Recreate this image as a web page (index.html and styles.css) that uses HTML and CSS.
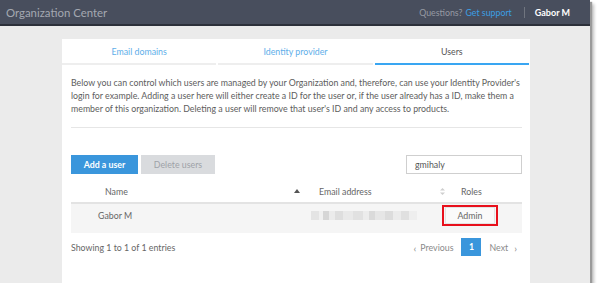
FILE: index.html
```html
<!DOCTYPE html>
<html lang="en">

<head>
    <meta charset="UTF-8">
    <meta name="viewport" content="width=device-width, initial-scale=1.0">
    <link rel="stylesheet" href="styles.css">
</head>

<body>
    <div class="window">
        <div class="topbar">
            <span class="app-title">Organization Center</span>
            <div class="topbar-right">
                <span class="questions">Questions?</span>
                <a class="support-link">Get support</a>
                <span class="topbar-sep"></span>
                <span class="user-name">Gabor M</span>
            </div>
        </div>
        <div class="main">
            <div class="card">
                <div class="tabs">
                    <div class="tab">Email domains</div>
                    <div class="tab">Identity provider</div>
                    <div class="tab tab-active">Users</div>
                </div>
                <div class="card-body">
                    <p class="intro">Below you can control which users are managed by your Organization and, therefore, can use your Identity Provider's login for example. Adding a user here will either create a ID for the user or, if the user already has a ID, make them a member of this organization. Deleting a user will remove that user's ID and any access to products.</p>
                    <div class="divider"></div>
                    <div class="toolbar">
                        <div class="toolbar-buttons">
                            <button class="btn btn-primary">Add a user</button>
                            <button class="btn btn-disabled">Delete users</button>
                        </div>
                        <div class="search-box">gmihaly</div>
                    </div>
                    <div class="users-table">
                        <div class="th th-name">
                            <span>Name</span>
                            <svg class="sort-icon" width="6" height="4" viewBox="0 0 6 4"><path d="M0 4 L3 0 L6 4 Z" fill="#555"/></svg>
                        </div>
                        <div class="th th-email">
                            <span>Email address</span>
                            <svg class="sort-icon" width="5" height="7" viewBox="0 0 5 7"><path d="M0 2.6 L2.5 0 L5 2.6 Z M0 4.4 L2.5 7 L5 4.4 Z" fill="#cfcfcf"/></svg>
                        </div>
                        <div class="th th-roles">Roles</div>
                        <div class="td td-name">Gabor M</div>
                        <div class="td td-email"><div class="blurred-email"></div></div>
                        <div class="td td-roles"><span class="role-badge">Admin</span></div>
                    </div>
                    <div class="table-footer">
                        <span class="entries-info">Showing 1 to 1 of 1 entries</span>
                        <div class="pagination">
                            <span class="page-link"><span class="chev">&lsaquo;</span>Previous</span>
                            <span class="page-current">1</span>
                            <span class="page-link">Next<span class="chev">&rsaquo;</span></span>
                        </div>
                    </div>
                </div>
            </div>
        </div>
    </div>
</body>

</html>
```

FILE: styles.css
```css
body {
    margin: 0;
    background-color: #ffffff;
    font-family: 'Lato', sans-serif;
}

.window {
    width: 590px;
    height: 283px;
    background-color: #ebebeb;
    box-shadow: 2px 2px 1px #9a9a9a, 4px 4px 3px rgba(0, 0, 0, 0.25);
    overflow: hidden;
    display: flex;
    flex-direction: column;
}

.topbar {
    height: 24px;
    flex-shrink: 0;
    background-color: #484e5d;
    border-bottom: 2px solid #2c303a;
    display: flex;
    align-items: center;
    justify-content: space-between;
    padding: 0 6px;
}

.app-title {
    color: #a4a8b1;
    font-size: 11.4px;
}

.topbar-right {
    display: flex;
    align-items: center;
    font-size: 8.8px;
    margin-right: 14px;
}

.questions {
    color: #969aa3;
}

.support-link {
    color: #3b9fe4;
    margin-left: 3px;
}

.topbar-sep {
    width: 1px;
    height: 11px;
    background-color: #70757f;
    margin: 0 10px 0 12px;
}

.user-name {
    color: #ffffff;
    font-weight: bold;
    font-size: 9px;
}

.main {
    flex: 1;
    padding: 13px 0 0 62px;
    display: flex;
}

.card {
    width: 468px;
    background-color: #ffffff;
}

.tabs {
    display: flex;
    height: 26px;
}

.tab {
    flex: 1;
    margin: 0 1px;
    display: flex;
    align-items: center;
    justify-content: center;
    font-size: 8.8px;
    color: #5eaee9;
    border-bottom: 2px solid #eeeeee;
}

.tab:first-child {
    margin-left: 0;
}

.tab-active {
    color: #555555;
    border-bottom-color: #39a6f2;
}

.card-body {
    padding: 0 8px 0 9px;
}

.intro {
    margin: 12px 0 0;
    font-size: 8.8px;
    line-height: 12.8px;
    color: #5d5d5d;
}

.divider {
    height: 1px;
    background-color: #e6e6e6;
    margin-top: 12px;
}

.toolbar {
    margin-top: 27px;
    display: flex;
    justify-content: space-between;
    align-items: center;
}

.toolbar-buttons {
    display: flex;
    gap: 3px;
}

.btn {
    height: 19px;
    border: none;
    padding: 0;
    font-family: 'Lato', sans-serif;
    font-size: 8.8px;
}

.btn-primary {
    width: 67px;
    background-color: #3a96dc;
    color: #ffffff;
    font-weight: bold;
}

.btn-disabled {
    width: 74px;
    background-color: #d9dbde;
    color: #9ea2a8;
}

.search-box {
    width: 106px;
    height: 17px;
    border: 1px solid #cfcfcf;
    padding-left: 8px;
    font-size: 8.8px;
    line-height: 17px;
    color: #555555;
}

.users-table {
    display: grid;
    grid-template-columns: 234px 145px 72px;
}

.th {
    height: 22px;
    padding-top: 6px;
    display: flex;
    align-items: center;
    font-size: 8.8px;
    color: #666666;
    border-bottom: 2px solid #e3e3e3;
}

.sort-icon {
    margin-left: auto;
}

.th-name {
    padding-left: 34px;
    padding-right: 5px;
}

.th-email {
    padding-left: 14px;
    padding-right: 5px;
}

.th-roles {
    padding-left: 11px;
}

.td {
    height: 29px;
    background-color: #f5f5f5;
    display: flex;
    align-items: flex-start;
    font-size: 8.8px;
    color: #666666;
}

.td-name {
    padding: 6px 0 0 27px;
    height: 23px;
}

.td-email {
    padding: 7px 0 0 6px;
    height: 22px;
}

.blurred-email {
    width: 106px;
    height: 9px;
    background: linear-gradient(90deg,
        #e4e4e4 0, #e4e4e4 8px, #f0f0f0 8px, #f0f0f0 12px,
        #d6d6d6 12px, #d6d6d6 18px, #ebebeb 18px, #ebebeb 24px,
        #dedede 24px, #dedede 32px, #e9e9e9 32px, #e9e9e9 42px,
        #e1e1e1 42px, #e1e1e1 52px, #ececec 52px, #ececec 58px,
        #dadada 58px, #dadada 64px, #e6e6e6 64px, #e6e6e6 74px,
        #dcdcdc 74px, #dcdcdc 82px, #ebebeb 82px, #ebebeb 90px,
        #e0e0e0 90px, #e0e0e0 98px, #eeeeee 98px);
}

.td-roles {
    padding-top: 3px;
    height: 26px;
}

.role-badge {
    position: relative;
    margin-left: -5px;
    width: 48px;
    height: 15px;
    line-height: 15px;
    text-align: center;
    background-color: #fafafa;
    border: 1px solid #e4e4e4;
    color: #666666;
}

/* red annotation frame drawn around the role */
.role-badge::after {
    content: '';
    position: absolute;
    left: -4px;
    top: -3px;
    right: -4px;
    bottom: -3px;
    border: 2.5px solid #e8101c;
}

.table-footer {
    margin-top: 5px;
    display: flex;
    justify-content: space-between;
    align-items: center;
    font-size: 8.8px;
    color: #666666;
}

.pagination {
    display: flex;
    align-items: center;
    gap: 8px;
    margin-right: 5px;
}

.page-link {
    color: #8a8a8a;
    display: flex;
    align-items: center;
}

.chev {
    font-size: 10px;
    margin: 2px 4px 0;
}

.page-link:last-child .chev {
    margin-right: 0;
    margin-left: 6px;
}

.page-current {
    width: 20px;
    height: 18px;
    line-height: 18px;
    text-align: center;
    background-color: #3a96dc;
    color: #ffffff;
    font-weight: bold;
}
```
